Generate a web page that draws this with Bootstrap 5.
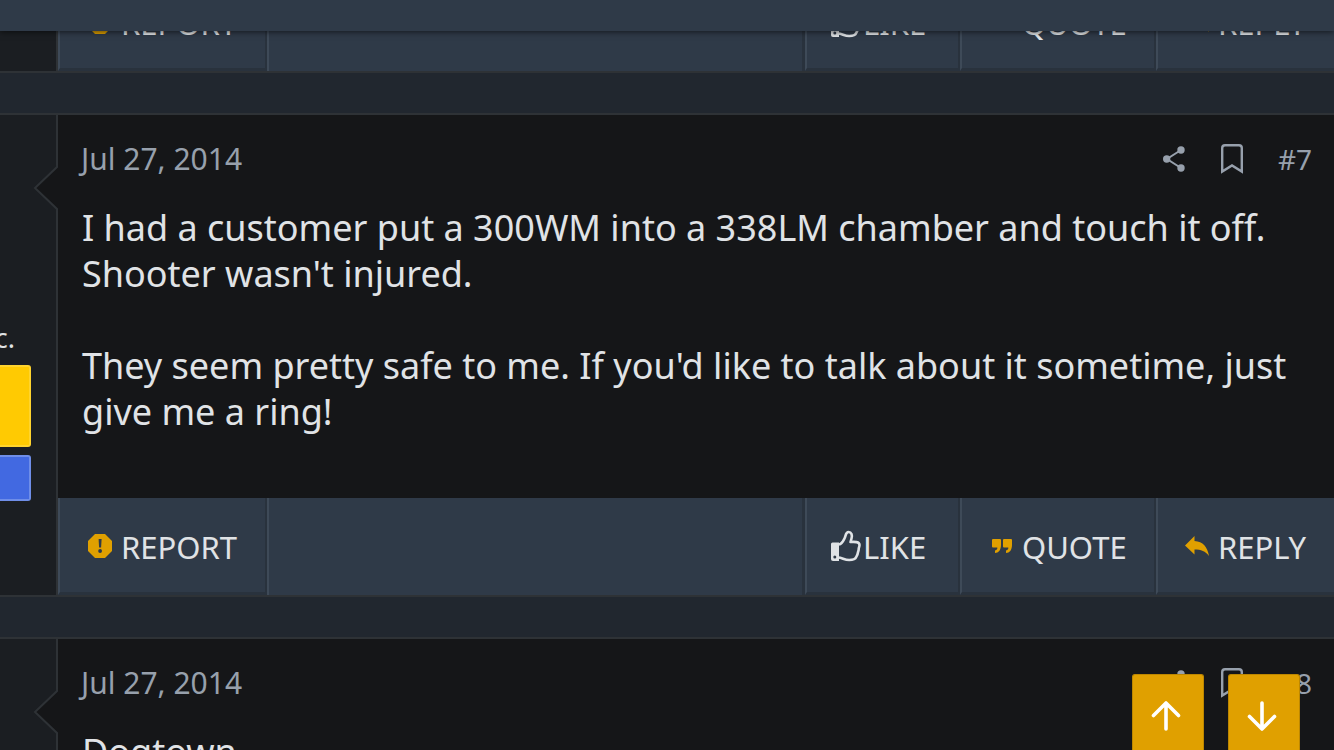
<!DOCTYPE html>
<html lang="en" data-bs-theme="dark">
<head>
<meta charset="utf-8">
<meta name="viewport" content="width=device-width, initial-scale=1">
<title>Forum thread</title>
<link href="https://cdn.jsdelivr.net/npm/bootstrap@5.3.0/dist/css/bootstrap.min.css" rel="stylesheet">
<style>
body{background:#21272f;color:#e0e3e6;font-family:"Noto Sans","Open Sans",sans-serif}
.site-bar{height:31px;background:#2f3a48;box-shadow:0 1px 6px rgba(0,0,0,.6)}
.thread{gap:40px;padding-top:31px}
.post{border:solid #2e3236;border-width:2px 0;background:#151618}
.post-tail{height:42px;border-top:0}
.author{width:58px;background:#1b1e22;border-right:2px solid #2e3236}
.author-name{width:15px;margin-top:205px;font-size:27px;line-height:36px}
.rank{width:31px;border:solid;border-width:2px 2px 2px 0;border-radius:0 3px 3px 0}
.rank-gold{height:82px;margin-top:9px;background:#ffca02;border-color:#ffd42e}
.rank-blue{height:46px;margin-top:8px;background:#4269e1;border-color:#6f8ee8}
.notch{left:-25px;top:50px}
.post-head{padding:23px 22px 0 23px;font-size:30px;line-height:42px}
.post-head,.post-head a{color:#97a0ac}
.post-head nav{gap:34px;font-size:28px}
.post-text{padding:25px 20px 63px 24px;font-size:36px;line-height:46px}
.actions{height:97px;background:#2f3a48}
.act{height:97px;padding:4px 0 0 28px;border:solid;border-width:0 2px 3px 2px;border-color:transparent #29323d #29323d #3e4a58;border-radius:0;background:#2f3a48;color:#e0e3e6;font-size:31px;line-height:40px}
.act svg{flex:none;margin-bottom:2px}
.act-report{width:209px;gap:9px}
.act-like{width:155px;padding-left:24px;gap:2px}
.act-quote{width:196px;padding-left:30px;gap:10px}
.act-reply{width:178px;padding-left:27px;border-right:0;gap:9px}
.act-fill{border:solid;border-width:0 3px 0 2px;border-color:#29323d #29323d #29323d #3e4a58}
.jump{right:34px;gap:24px}
.jump .btn{width:72px;height:76px;padding:6px 4px 0 0;border:1px solid #bd8700;border-bottom:0;border-radius:3px 3px 0 0;background:#e0a000}
</style>
</head>
<body class="vh-100 overflow-hidden">
<svg class="d-none" aria-hidden="true">
<symbol id="i-report" viewBox="0 0 24 24"><path fill="#e0a000" d="M7 0h10l7 7v10l-7 7H7l-7-7V7z"/><path fill="#2f3a48" d="M10.600 5h3l-.5 8.500h-2z"/><circle cx="12.100" cy="17" r="1.900" fill="#2f3a48"/></symbol>
<symbol id="i-like" viewBox="0 0 30 32"><path fill="#e0e3e6" d="M0 14q0-1.500 1.500-1.500H8V31H2a2 2 0 0 1-2-2z"/><circle cx="3.800" cy="27" r="1.500" fill="#2f3a48"/><path fill="none" stroke="#e0e3e6" stroke-width="2.600" stroke-linejoin="round" d="M8 14.500c3-.5 4-3 5.500-6C15 5.500 14.500 2 17.500 2c3 0 4 3 3 6.500l-1 3.500c4-.2 9-.5 9 3 0 2-.8 2.500-.8 4 0 2-.7 2.500-.9 4-.3 2-.9 2.500-1.600 4-1 2.500-4 3-7 3-5 0-7-2.500-11.200-2.500"/></symbol>
<symbol id="i-quote" viewBox="0 0 20 14"><path fill="#e0a000" d="M1 0h7Q9 0 9 1V6c0 5-2.500 8-6 8V11.500C5 11.200 5.500 9.800 5.300 8.500H1Q0 8.500 0 7.500V1Q0 0 1 0z"/><path fill="#e0a000" d="M12 0h7Q20 0 20 1V6c0 5-2.500 8-6 8V11.500C16 11.200 16.500 9.800 16.300 8.500H12Q11 8.500 11 7.500V1Q11 0 12 0z"/></symbol>
<symbol id="i-reply" viewBox="0 0 24 20"><path fill="#e0a000" d="M0 9.500 9.500 0v5C18 5.500 22.500 11 24 20 20.500 15 16 13.500 9.500 13.500V18.500z"/></symbol>
<symbol id="i-share" viewBox="0 0 22 26"><path fill="none" stroke="currentColor" stroke-width="2" d="M18 4 4 13l14 9"/><g fill="currentColor"><circle cx="18" cy="4" r="3.700"/><circle cx="3.700" cy="13" r="3.700"/><circle cx="18" cy="22" r="3.700"/></g></symbol>
<symbol id="i-mark" viewBox="0 0 22 30"><path fill="none" stroke="currentColor" stroke-width="2.400" d="M1.200 27.500V4Q1.200 1.200 4 1.200H18Q20.800 1.200 20.800 4V27.500L11 21.500z"/></symbol>
<symbol id="i-notch" viewBox="0 0 25 46"><path fill="#151618" stroke="#2e3236" stroke-width="2" d="M25 1 2 23l23 22"/></symbol>
</svg>

<header class="site-bar fixed-top"></header>

<main class="thread vh-100 overflow-hidden d-flex flex-column">
  <article class="post post-tail d-flex flex-shrink-0 overflow-hidden align-items-end">
    <aside class="author align-self-stretch flex-shrink-0"></aside>
    <footer class="actions d-flex flex-grow-1">
      <button type="button" class="btn act act-report d-flex align-items-center"><svg width="24" height="24"><use href="#i-report"/></svg>REPORT</button>
      <div class="act-fill flex-grow-1"></div>
      <button type="button" class="btn act act-like d-flex align-items-center"><svg width="30" height="32"><use href="#i-like"/></svg>LIKE</button>
      <button type="button" class="btn act act-quote d-flex align-items-center"><svg width="20" height="14"><use href="#i-quote"/></svg>QUOTE</button>
      <button type="button" class="btn act act-reply d-flex align-items-center"><svg width="24" height="20"><use href="#i-reply"/></svg>REPLY</button>
    </footer>
  </article>

  <article class="post d-flex flex-shrink-0">
    <aside class="author flex-shrink-0">
      <div class="author-name d-flex justify-content-end overflow-hidden">c.</div>
      <div class="rank rank-gold"></div>
      <div class="rank rank-blue"></div>
    </aside>
    <div class="flex-grow-1 position-relative d-flex flex-column">
      <svg class="notch position-absolute" width="25" height="46"><use href="#i-notch"/></svg>
      <header class="post-head d-flex justify-content-between">
        <time datetime="2014-07-27">Jul 27, 2014</time>
        <nav class="d-flex align-items-center">
          <a href="#share" class="d-flex" aria-label="Share"><svg width="24" height="26"><use href="#i-share"/></svg></a>
          <a href="#bookmark" class="d-flex" aria-label="Bookmark"><svg width="24" height="30"><use href="#i-mark"/></svg></a>
          <a href="#post-7" class="text-decoration-none">#7</a>
        </nav>
      </header>
      <div class="post-text flex-grow-1">I had a customer put a 300WM into a 338LM chamber and touch it off. Shooter wasn't injured.<br><br>They seem pretty safe to me. If you'd like to talk about it sometime, just give me a ring!</div>
      <footer class="actions d-flex">
        <button type="button" class="btn act act-report d-flex align-items-center"><svg width="24" height="24"><use href="#i-report"/></svg>REPORT</button>
        <div class="act-fill flex-grow-1"></div>
        <button type="button" class="btn act act-like d-flex align-items-center"><svg width="30" height="32"><use href="#i-like"/></svg>LIKE</button>
        <button type="button" class="btn act act-quote d-flex align-items-center"><svg width="20" height="14"><use href="#i-quote"/></svg>QUOTE</button>
        <button type="button" class="btn act act-reply d-flex align-items-center"><svg width="24" height="20"><use href="#i-reply"/></svg>REPLY</button>
      </footer>
    </div>
  </article>

  <article class="post d-flex flex-shrink-0">
    <aside class="author flex-shrink-0"></aside>
    <div class="flex-grow-1 position-relative">
      <svg class="notch position-absolute" width="25" height="46"><use href="#i-notch"/></svg>
      <header class="post-head d-flex justify-content-between">
        <time datetime="2014-07-27">Jul 27, 2014</time>
        <nav class="d-flex align-items-center">
          <a href="#share" class="d-flex" aria-label="Share"><svg width="24" height="26"><use href="#i-share"/></svg></a>
          <a href="#bookmark" class="d-flex" aria-label="Bookmark"><svg width="24" height="30"><use href="#i-mark"/></svg></a>
          <a href="#post-8" class="text-decoration-none">#8</a>
        </nav>
      </header>
      <div class="post-text">Dogtown</div>
    </div>
  </article>
</main>

<div class="jump position-fixed bottom-0 d-flex">
  <button type="button" class="btn" aria-label="To top"><svg width="30" height="32" viewBox="0 0 30 32" fill="none" stroke="#fff" stroke-width="3.600" stroke-linecap="round" stroke-linejoin="round"><path d="M15 29V3M2.500 15.500 15 3l12.500 12.500"/></svg></button>
  <button type="button" class="btn" aria-label="To bottom"><svg width="30" height="32" viewBox="0 0 30 32" fill="none" stroke="#fff" stroke-width="3.600" stroke-linecap="round" stroke-linejoin="round"><path d="M15 3v26M2.500 16.500 15 29l12.500-12.500"/></svg></button>
</div>
<script src="https://cdn.jsdelivr.net/npm/bootstrap@5.3.0/dist/js/bootstrap.bundle.min.js"></script>
</body>
</html>
